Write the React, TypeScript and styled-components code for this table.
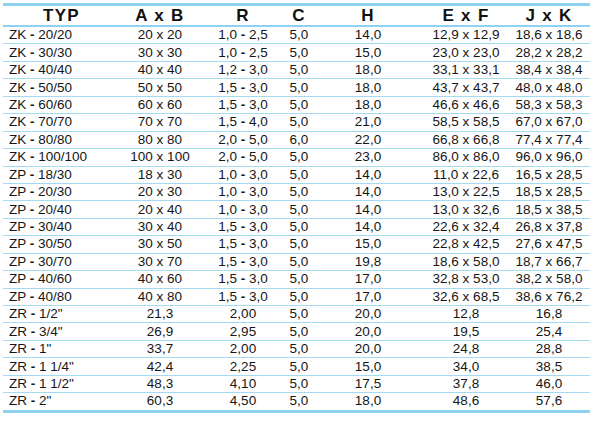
import styled, { createGlobalStyle } from 'styled-components';

const GlobalStyle = createGlobalStyle`
  body {
    margin: 0;
    background: #ffffff;
    font-family: 'Liberation Sans', Arial, sans-serif;
  }
`;

const headers = ['TYP', 'A x B', 'R', 'C', 'H', 'E x F', 'J x K'];

const rows = [
  ['ZK - 20/20', '20 x 20', '1,0 - 2,5', '5,0', '14,0', '12,9 x 12,9', '18,6 x 18,6'],
  ['ZK - 30/30', '30 x 30', '1,0 - 2,5', '5,0', '15,0', '23,0 x 23,0', '28,2 x 28,2'],
  ['ZK - 40/40', '40 x 40', '1,2 - 3,0', '5,0', '18,0', '33,1 x 33,1', '38,4 x 38,4'],
  ['ZK - 50/50', '50 x 50', '1,5 - 3,0', '5,0', '18,0', '43,7 x 43,7', '48,0 x 48,0'],
  ['ZK - 60/60', '60 x 60', '1,5 - 3,0', '5,0', '18,0', '46,6 x 46,6', '58,3 x 58,3'],
  ['ZK - 70/70', '70 x 70', '1,5 - 4,0', '5,0', '21,0', '58,5 x 58,5', '67,0 x 67,0'],
  ['ZK - 80/80', '80 x 80', '2,0 - 5,0', '6,0', '22,0', '66,8 x 66,8', '77,4 x 77,4'],
  ['ZK - 100/100', '100 x 100', '2,0 - 5,0', '5,0', '23,0', '86,0 x 86,0', '96,0 x 96,0'],
  ['ZP - 18/30', '18 x 30', '1,0 - 3,0', '5,0', '14,0', '11,0 x 22,6', '16,5 x 28,5'],
  ['ZP - 20/30', '20 x 30', '1,0 - 3,0', '5,0', '14,0', '13,0 x 22,5', '18,5 x 28,5'],
  ['ZP - 20/40', '20 x 40', '1,0 - 3,0', '5,0', '14,0', '13,0 x 32,6', '18,5 x 38,5'],
  ['ZP - 30/40', '30 x 40', '1,5 - 3,0', '5,0', '14,0', '22,6 x 32,4', '26,8 x 37,8'],
  ['ZP - 30/50', '30 x 50', '1,5 - 3,0', '5,0', '15,0', '22,8 x 42,5', '27,6 x 47,5'],
  ['ZP - 30/70', '30 x 70', '1,5 - 3,0', '5,0', '19,8', '18,6 x 58,0', '18,7 x 66,7'],
  ['ZP - 40/60', '40 x 60', '1,5 - 3,0', '5,0', '17,0', '32,8 x 53,0', '38,2 x 58,0'],
  ['ZP - 40/80', '40 x 80', '1,5 - 3,0', '5,0', '17,0', '32,6 x 68,5', '38,6 x 76,2'],
  ['ZR - 1/2"', '21,3', '2,00', '5,0', '20,0', '12,8', '16,8'],
  ['ZR - 3/4"', '26,9', '2,95', '5,0', '20,0', '19,5', '25,4'],
  ['ZR - 1"', '33,7', '2,00', '5,0', '20,0', '24,8', '28,8'],
  ['ZR - 1 1/4"', '42,4', '2,25', '5,0', '15,0', '34,0', '38,5'],
  ['ZR - 1 1/2"', '48,3', '4,10', '5,0', '17,5', '37,8', '46,0'],
  ['ZR - 2"', '60,3', '4,50', '5,0', '18,0', '48,6', '57,6'],
];

// the dash between two values is printed heavier than the digits
function withDash(text: string) {
  const parts = text.split(' - ');
  if (parts.length < 2) return text;
  return (
    <>
      {parts[0]} <Dash>-</Dash> {parts[1]}
    </>
  );
}

export default function App() {
  return (
    <>
      <GlobalStyle />
      <Page>
        <Table>
          <HeadRow>
            {headers.map((h) => (
              <HeadCell key={h}>{h}</HeadCell>
            ))}
          </HeadRow>
          {rows.map((row) => (
            <Row key={row[0]}>
              {row.map((cell, i) => (
                <Cell key={i} $first={i === 0}>
                  {withDash(cell)}
                </Cell>
              ))}
            </Row>
          ))}
        </Table>
      </Page>
    </>
  );
}

const Page = styled.div`
  width: 596px;
  height: 421px;
  padding: 3px 0 0 3px;
  box-sizing: border-box;
  overflow: hidden;
`;

const Table = styled.div`
  width: 587px;
  border-top: 3px solid #8fd1f1;
`;

const columns = '117px 80px 86px 26px 112px 84px 82px';

const HeadRow = styled.div`
  display: grid;
  grid-template-columns: ${columns};
  height: 19px;
  align-items: center;
  border-bottom: 2px solid #8fd1f1;
`;

const HeadCell = styled.div`
  text-align: center;
  font-weight: bold;
  font-size: 17px;
  letter-spacing: 1.3px;
  color: #111111;
  white-space: nowrap;
  line-height: 19px;
`;

const Row = styled.div`
  display: grid;
  grid-template-columns: ${columns};
  height: 16.45px;
  align-items: center;
  border-bottom: 1px solid #a4daf3;

  &:last-child {
    border-bottom: 3px solid #8fd1f1;
  }
`;

const Cell = styled.div<{ $first?: boolean }>`
  text-align: ${(p) => (p.$first ? 'left' : 'center')};
  padding-left: ${(p) => (p.$first ? '6px' : '0')};
  font-size: 13.5px;
  color: #161616;
  white-space: nowrap;
  line-height: 16px;
`;

const Dash = styled.span`
  font-weight: bold;
`;
